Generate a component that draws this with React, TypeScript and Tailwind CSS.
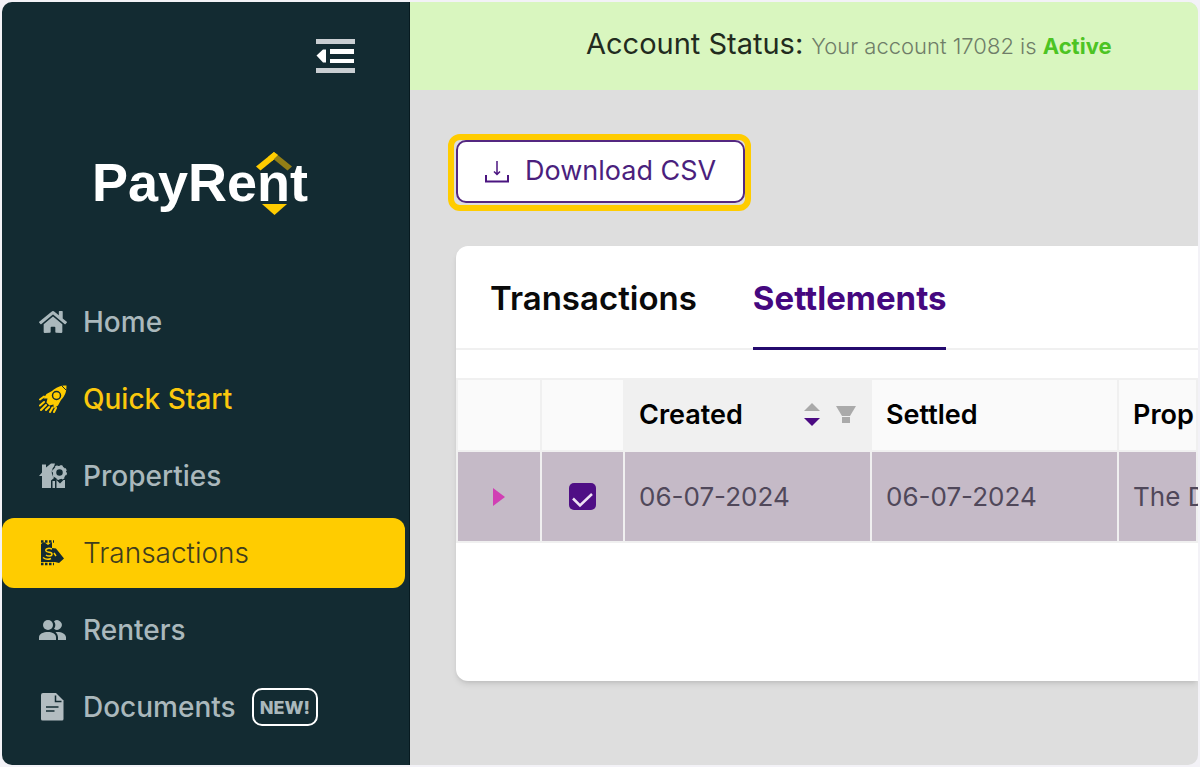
import { FaHome } from 'react-icons/fa'

const navLink = 'flex h-[70px] items-center gap-4 rounded-[12px] pl-[37px] text-[28px] font-medium'

function CollapseIcon() {
  return (
    <svg width="40" height="36" viewBox="0 0 40 36" aria-hidden="true">
      <g fill="#c9ced2">
        <rect x="0" y="1" width="39" height="5" />
        <rect x="0" y="30" width="39" height="5" />
      </g>
      <path d="M0.500 17.500 7 11.500h3v13H7z" fill="#fff" />
      <rect x="14" y="11" width="24" height="5" fill="#fff" />
      <rect x="14" y="21" width="24" height="4" fill="#fff" />
    </svg>
  )
}

function Logo() {
  return (
    <svg width="216" height="66" viewBox="0 0 216 66" role="img" aria-label="PayRent">
      <text x="0" y="49" fill="#fff" fontFamily="Liberation Sans, sans-serif" fontWeight="700" fontSize="54">
        PayRent
      </text>
      <path d="M182 0v7.500L168.500 18.500 164 14.500z" fill="#ffcc00" />
      <path d="M182 0v7.500L195.500 18.500 200 14.500z" fill="#937f16" />
      <path d="M182 0l4 3-6 6-4-4z" fill="#ffcc00" />
      <path d="M170 52h25l-12.500 11z" fill="#ffcc00" />
    </svg>
  )
}

function RocketIcon() {
  return (
    <svg width="28" height="28" viewBox="0 0 28 28" aria-hidden="true">
      <path d="M27.500 0.500C21 .5 17 2.500 13 6L7.500 9 4.500 13.500l4 0-1 4 3 3 4-1 0 4 4.500-3L22 15c4-4 5.500-8 5.500-14.500z" fill="#ffcc00" />
      <circle cx="17.500" cy="10.500" r="4" fill="none" stroke="#132b32" strokeWidth="1.500" />
      <path d="m23 1 4 4" stroke="#132b32" strokeWidth="1" />
      <path d="m5 11.500-4 3M5 17l-4 3.500M7 20l-5 5M10 22l-3 3M13.500 22.500 11 27M17 23l-2 4" stroke="#ffcc00" strokeWidth="2" strokeLinecap="round" />
    </svg>
  )
}

function PropertiesIcon() {
  return (
    <svg width="28" height="28" viewBox="0 0 28 28" fill="#aab8bc" aria-hidden="true">
      <path d="M3 2.500h4v3L12 1.500h4l-1 3c-3 3-3 8 0 11.500l-3 2.500V26H3V14H0l3-3.500z" />
      <circle cx="20.500" cy="10.500" r="5" fill="none" stroke="#aab8bc" strokeWidth="3.500" />
      <circle cx="20.500" cy="10.500" r="6.500" fill="none" stroke="#aab8bc" strokeWidth="2" strokeDasharray="2.500 2.600" />
      <path d="M13.500 19h2.500V26h-2.500zM17.500 18l3.500 3.500 3.500-3.500h1.500V26h-8.500z" />
    </svg>
  )
}

function TransactionsIcon() {
  return (
    <svg width="28" height="28" viewBox="0 0 28 28" aria-hidden="true">
      <path d="M2 5l3-2 4 3 4-3v6l4 .5 8 10-5 4.500-4-1H2z" fill="#132b32" />
      <path d="M2 2.500h13M2 25h13" stroke="#132b32" strokeWidth="2.500" strokeDasharray="2.500 1.500" />
      <path d="M13 10c-4-1.500-7 0-6 2s6 .5 6 3-4 2.500-6 1M4 18.500c3 2.500 6 2 8 1M15 14l2 3" stroke="#ffcc00" strokeWidth="1.500" fill="none" />
    </svg>
  )
}

function RentersIcon() {
  return (
    <svg width="28" height="28" viewBox="0 0 28 28" fill="#aab8bc" aria-hidden="true">
      <circle cx="9" cy="9" r="5" />
      <path d="M0 24v-2.500c0-4 4.500-5.500 9-5.500 3.800 0 8 1.500 8 5.500V24z" />
      <path d="M15 5.200a4.800 4.800 0 1 1 0 7.600 6.500 6.500 0 0 0 0-7.600z" />
      <path d="M16.500 16c5.500-.5 10.500 1.500 10.500 5.500V24h-8v-2.500c0-2.200-1-4-2.500-5.500z" />
    </svg>
  )
}

function DocumentIcon() {
  return (
    <svg width="28" height="28" viewBox="0 0 28 28" aria-hidden="true">
      <path d="M4 0h13l7.500 7.500V26a1.500 1.500 0 0 1-1.500 1.500H3.500A1.500 1.500 0 0 1 2 26V2a2 2 0 0 1 2-2z" fill="#b3bdc1" />
      <path d="M16.500 2.500V8.500h6" fill="none" stroke="#132b32" strokeWidth="1.500" />
      <path d="M7 14h12.500M7 18h8.500" stroke="#132b32" strokeWidth="1.500" />
    </svg>
  )
}

function DownloadIcon() {
  return (
    <svg width="24" height="24" viewBox="0 0 24 24" fill="none" stroke="#4b1580" strokeWidth="2" aria-hidden="true">
      <path d="M12 1v13M9 11.500l3 3 3-3" strokeWidth="1.500" />
      <path d="M1 15v6.500h22V15" />
    </svg>
  )
}

function Sidebar() {
  return (
    <aside className="flex w-[408px] shrink-0 flex-col border-r border-[#071a20] bg-[#132b32] pt-9">
      <button type="button" aria-label="Collapse menu" className="mr-[53px] self-end">
        <CollapseIcon />
      </button>
      <a href="#" className="mt-[78px] ml-[90px] self-start">
        <Logo />
      </a>
      <nav className="mt-[69px] mr-1 flex flex-col gap-[7px] text-[#aab8bc]">
        <a href="#" className={navLink}>
          <FaHome size={28} />
          Home
        </a>
        <a href="#" className={`${navLink} text-[#fbc80d]`}>
          <RocketIcon />
          Quick Start
        </a>
        <a href="#" className={navLink}>
          <PropertiesIcon />
          Properties
        </a>
        <a
          href="#"
          aria-current="page"
          className="flex h-[70px] items-center gap-4 rounded-[12px] bg-[#ffcc00] pl-[37px] text-[28px] font-light text-[#3f3d1e]"
        >
          <TransactionsIcon />
          Transactions
        </a>
        <a href="#" className={navLink}>
          <RentersIcon />
          Renters
        </a>
        <a href="#" className={navLink}>
          <DocumentIcon />
          Documents
          <span className="flex h-[38px] items-center rounded-[10px] border-2 border-white px-[6px] text-[18px] font-extrabold">
            NEW!
          </span>
        </a>
      </nav>
    </aside>
  )
}

function SettlementsTable() {
  const head = 'border-2 border-[#f0f0f0] bg-[#fafafa] px-[14px] text-left font-semibold whitespace-nowrap'
  const cell = 'border-2 border-[#f0f0f0] px-[14px] whitespace-nowrap'

  return (
    <table className="mt-7 w-full table-fixed border-collapse">
      <colgroup>
        <col className="w-[84px]" />
        <col className="w-[83px]" />
        <col className="w-[247px]" />
        <col className="w-[247px]" />
        <col />
      </colgroup>
      <thead>
        <tr className="h-[72px] text-[27px] text-black">
          <th className={head} aria-label="Expand" />
          <th className={head} aria-label="Select" />
          <th className="border-2 border-[#f0f0f0] bg-[#f0f0f0] px-[14px] text-left font-semibold">
            <div className="flex items-center">
              <span className="grow">Created</span>
              <button type="button" aria-label="Sort by created" className="mr-4">
                <svg width="16" height="24" viewBox="0 0 16 24">
                  <path d="M8 0l8 8H0z" fill="#a9a9a9" />
                  <path d="M0 15h16l-8 8z" fill="#4b0a82" />
                </svg>
              </button>
              <button type="button" aria-label="Filter by created">
                <svg width="20" height="18" viewBox="0 0 20 18" fill="#aaa">
                  <path d="M0 0h20l-6 10H6z" />
                  <path d="M6 11h8v6H6z" />
                </svg>
              </button>
            </div>
          </th>
          <th className={head}>Settled</th>
          <th className={head}>Prop</th>
        </tr>
      </thead>
      <tbody>
        <tr className="h-[91px] bg-[#c5bac7] text-[26px] text-[#50485a]">
          <td className={cell}>
            <button type="button" aria-label="Expand row" className="mx-auto block">
              <svg width="12" height="18" viewBox="0 0 12 18">
                <path d="M0 0l12 9-12 9z" fill="#d13fb4" />
              </svg>
            </button>
          </td>
          <td className={cell}>
            <label className="relative mx-auto block size-[27px]">
              <input
                type="checkbox"
                defaultChecked
                aria-label="Select row"
                className="block size-[27px] appearance-none rounded-[5px] bg-[#4f0f85]"
              />
              <svg className="pointer-events-none absolute inset-0" width="27" height="27" viewBox="0 0 27 27">
                <path d="M4 15.500l7 7L23 11" fill="none" stroke="#eee3f3" strokeWidth="2.500" />
              </svg>
            </label>
          </td>
          <td className={cell}>06-07-2024</td>
          <td className={cell}>06-07-2024</td>
          <td className={cell}>The D</td>
        </tr>
      </tbody>
    </table>
  )
}

export default function App() {
  return (
    <div className="flex min-h-screen bg-[#f3f2f7] p-[2px] font-[Inter,sans-serif]">
      <div className="flex min-w-0 grow overflow-hidden rounded-[10px] bg-[#dedede]">
        <Sidebar />
        <main className="min-w-0 grow">
          <div className="flex h-[88px] items-baseline gap-2 bg-[#d9f6bf] pt-5 pl-[176px] whitespace-nowrap">
            <h1 className="text-[29px] text-[#222b1e]">Account Status:</h1>
            <p className="text-[22px] font-light text-[#6f7d68]">
              Your account 17082 is <strong className="font-bold text-[#4cc423]">Active</strong>
            </p>
          </div>

          <div className="flex pt-11 pl-[38px]">
            <div className="rounded-[12px] border-[6px] border-[#ffcc00] pb-[2px] pl-[2px]">
              <button
                type="button"
                className="flex h-[63px] items-center gap-4 rounded-[10px] border-2 border-[#542781] bg-white px-[27px] text-[27px] text-[#4b1f7d]"
              >
                <DownloadIcon />
                Download CSV
              </button>
            </div>
          </div>

          <section className="mt-[35px] ml-[46px] min-h-[435px] overflow-hidden rounded-l-[12px] bg-white shadow-md">
            <div className="flex h-[104px] gap-14 border-b-2 border-[#f0f0f0] pl-[34px] text-[33px]" role="tablist">
              <button type="button" role="tab" aria-selected="false" className="pt-1 font-semibold text-[#0a0a0a]">
                Transactions
              </button>
              <button
                type="button"
                role="tab"
                aria-selected="true"
                className="-mb-[2px] border-b-[3px] border-[#240a6e] pt-1 font-bold text-[#45087f]"
              >
                Settlements
              </button>
            </div>
            <SettlementsTable />
          </section>
        </main>
      </div>
    </div>
  )
}
